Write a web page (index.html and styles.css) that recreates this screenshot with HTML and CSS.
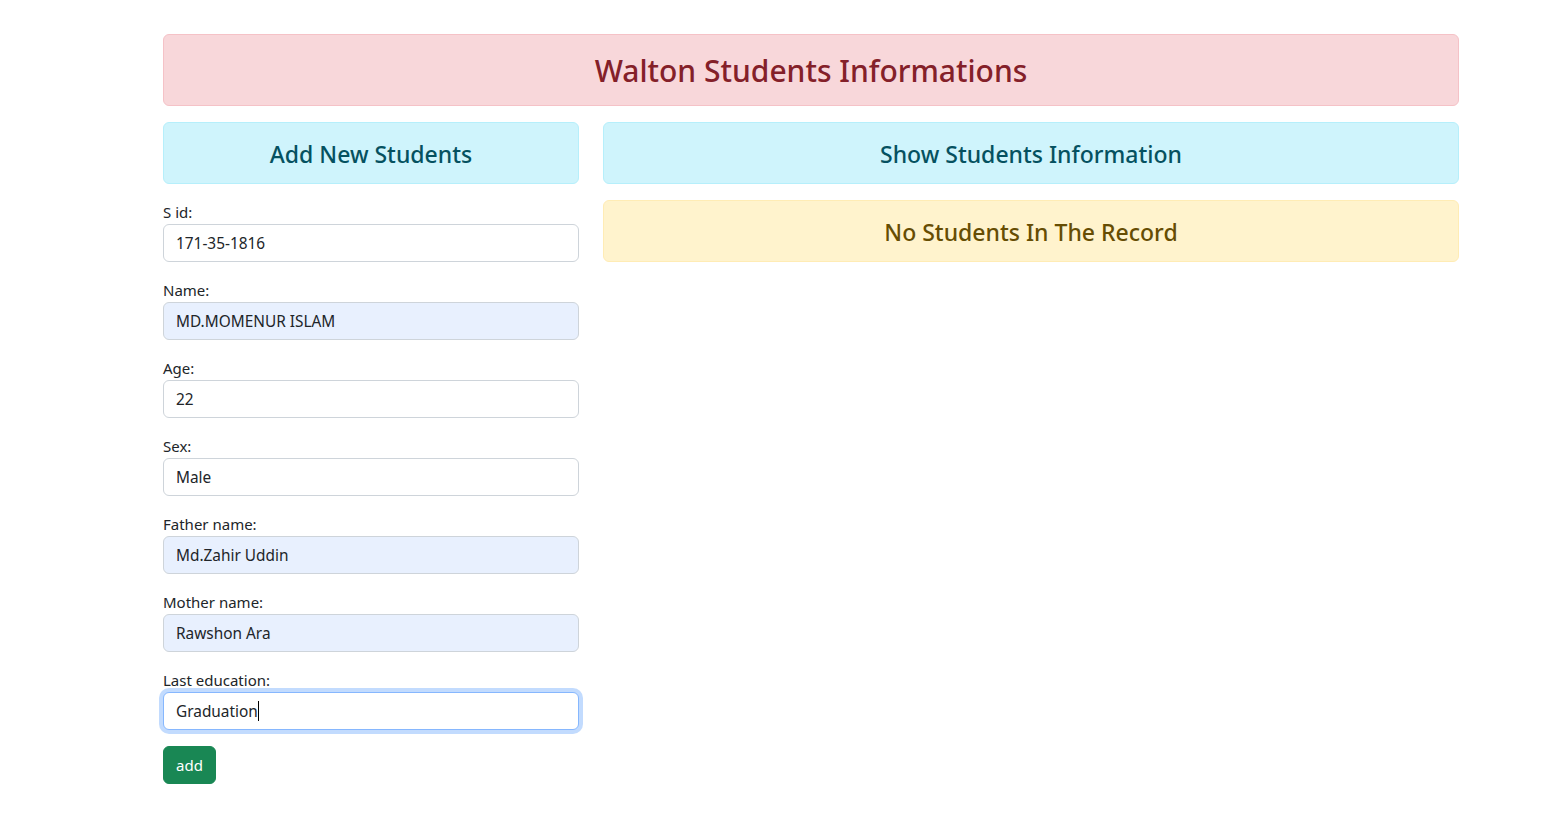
FILE: index.html
```html
<!DOCTYPE html>
<html lang="en">
<head>
<meta charset="utf-8">
<title>Walton Students Informations</title>
<link rel="stylesheet" href="styles.css">
</head>
<body>
<div class="page">
  <div class="alert alert-danger title"><h2>Walton Students Informations</h2></div>
  <div class="row">
    <div class="col-left">
      <div class="alert alert-info"><h4>Add New Students</h4></div>
      <form class="student-form">
        <div class="field">
          <label>S id:</label>
          <input class="form-control" type="text" value="171-35-1816">
        </div>
        <div class="field">
          <label>Name:</label>
          <input class="form-control autofill" type="text" value="MD.MOMENUR ISLAM">
        </div>
        <div class="field">
          <label>Age:</label>
          <input class="form-control" type="text" value="22">
        </div>
        <div class="field">
          <label>Sex:</label>
          <input class="form-control" type="text" value="Male">
        </div>
        <div class="field">
          <label>Father name:</label>
          <input class="form-control autofill" type="text" value="Md.Zahir Uddin">
        </div>
        <div class="field">
          <label>Mother name:</label>
          <input class="form-control autofill" type="text" value="Rawshon Ara">
        </div>
        <div class="field">
          <label>Last education:</label>
          <div class="input-wrap">
            <input class="form-control focused" type="text" value="Graduation">
            <div class="caret-layer" aria-hidden="true"><span class="ghost">Graduation</span><span class="caret"></span></div>
          </div>
        </div>
        <button type="button" class="btn btn-success">add</button>
      </form>
    </div>
    <div class="col-right">
      <div class="alert alert-info"><h4>Show Students Information</h4></div>
      <div class="alert alert-warning"><h4>No Students In The Record</h4></div>
    </div>
  </div>
</div>
</body>
</html>
```

FILE: styles.css
```css
* { box-sizing: border-box; }
html, body { margin: 0; padding: 0; background: #fff; }
body {
  font-family: "Noto Sans", "Open Sans", "Liberation Sans", sans-serif;
  font-size: 16px;
  line-height: 1.5;
  color: #212529;
}
.page {
  width: 1296px;
  margin-left: 163px;
  padding-top: 34px;
}
.alert {
  border: 1px solid transparent;
  border-radius: 6px;
  padding: 17px 16px 15px;
  margin-bottom: 16px;
  text-align: center;
}
.alert h2, .alert h4 {
  margin: 0;
  font-weight: 500;
}
.alert h2 { font-size: 30px; line-height: 38px; }
.alert h4 { font-size: 23px; line-height: 28px; }
.alert-danger { background: #f8d7da; border-color: #f5c2c7; color: #842029; }
.alert-info { background: #cff4fc; border-color: #b6effb; color: #055160; }
.alert-warning { background: #fff3cd; border-color: #ffecb5; color: #664d03; }
.row {
  display: grid;
  grid-template-columns: 416px 1fr;
  column-gap: 24px;
}
.field { margin-bottom: 16px; }
label { display: block; font-size: 15px; line-height: 24px; }
.form-control {
  display: block;
  width: 100%;
  height: 38px;
  padding: 6px 12px;
  font: inherit;
  font-size: 15.4px;
  color: #212529;
  background: #fff;
  border: 1px solid #ced4da;
  border-radius: 6px;
  outline: none;
}
.form-control.autofill { background: #e8f0fe; }
.form-control.focused {
  border-color: #86b7fe;
  box-shadow: 0 0 0 4px rgba(13, 110, 253, 0.25);
  caret-color: transparent;
}
.input-wrap { position: relative; }
.caret-layer {
  position: absolute;
  left: 13px;
  top: 0;
  height: 38px;
  display: flex;
  align-items: center;
  font-size: 15.4px;
  pointer-events: none;
}
.ghost { color: transparent; }
.caret { display: inline-block; width: 1px; height: 20px; background: #000; }
.btn {
  display: inline-block;
  height: 38px;
  padding: 6px 12px;
  font: inherit;
  font-size: 15px;
  border: 1px solid transparent;
  border-radius: 6px;
  cursor: pointer;
}
.btn-success { background: #198754; border-color: #198754; color: #fff; }
```
